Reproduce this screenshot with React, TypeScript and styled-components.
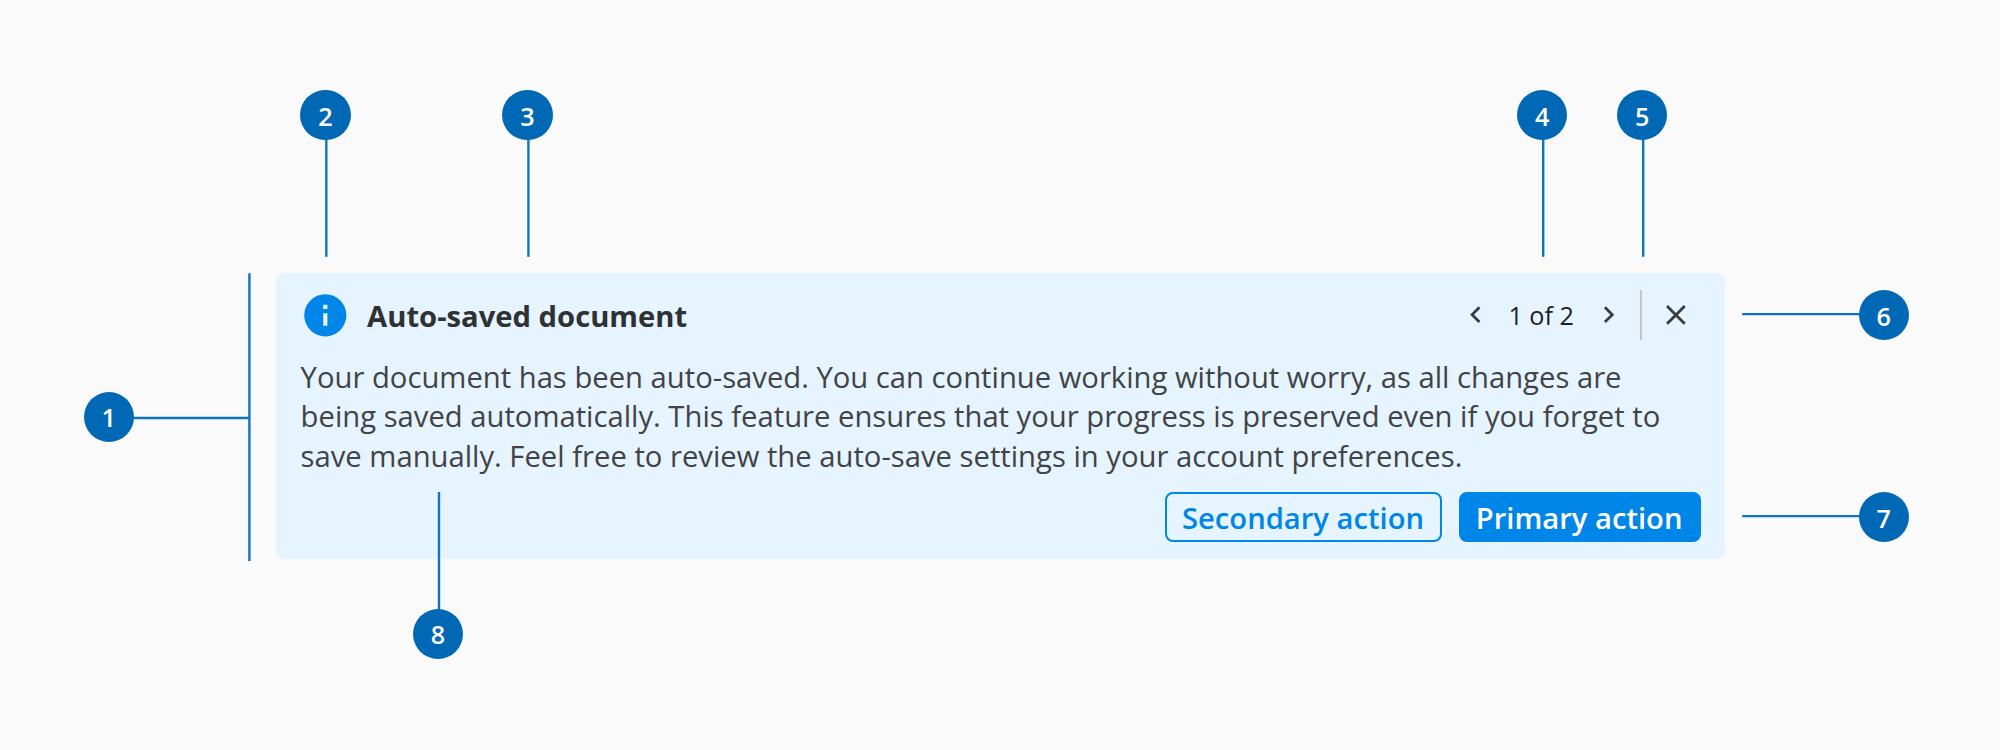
import React from "react";
import styled, { createGlobalStyle } from "styled-components";

const color = {
  page: "#fafafa",
  surface: "#e5f4ff",
  accent: "#0085e8",
  marker: "#0068b5",
  leader: "#0f74bf",
  title: "#2f3133",
  body: "#414345",
  icon: "#3a3c3e",
  divider: "#c2c5c8",
};

const GlobalStyle = createGlobalStyle`
  *, *::before, *::after { box-sizing: border-box; }
  body {
    margin: 0;
    background: ${color.page};
    font-family: "Open Sans", "Noto Sans", sans-serif;
  }
`;

const Stage = styled.main`
  position: relative;
  display: flex;
  align-items: flex-start;
  width: 2000px;
  height: 750px;
  padding: 273.4px 0 0 275.6px;
  overflow: hidden;
  background: ${color.page};
`;

const Banner = styled.section`
  display: flex;
  flex-direction: column;
  width: 1449.8px;
  height: 285.3px;
  padding: 16.6px 24.8px 16.4px 25px;
  border-radius: 8px;
  background: ${color.surface};
`;

const Header = styled.header`
  display: flex;
  align-items: center;
  height: 50px;
`;

const Title = styled.h2`
  flex: 1;
  margin: 1.4px 0 0 16.5px;
  color: ${color.title};
  font-size: 29.2px;
  font-weight: 700;
  line-height: 40px;
`;

const Pager = styled.nav`
  display: flex;
  align-items: center;
  margin-right: 14.6px;
`;

const PageCount = styled.span`
  margin: 1px 18px 0 16.4px;
  color: #1f2123;
  font-size: 25.2px;
  line-height: 34px;
`;

const IconButton = styled.button`
  display: flex;
  padding: 0;
  border: 0;
  background: none;
  color: ${color.icon};
`;

const CloseButton = styled(IconButton)`
  margin: 0 8.2px 0 16.3px;
`;

const Divider = styled.span`
  width: 2.4px;
  height: 50px;
  background: ${color.divider};
`;

const Icon = styled.svg<{ $size: number }>`
  display: block;
  flex: none;
  width: ${(p) => p.$size}px;
  height: ${(p) => p.$size}px;
  fill: currentColor;
`;

const InfoIcon = styled(Icon)`
  margin-left: -0.6px;
  color: ${color.accent};
`;

const Message = styled.p`
  margin: 17.9px 0 0;
  padding-right: 28px;
  color: ${color.body};
  font-size: 29.22px;
  line-height: 39.6px;
`;

const Actions = styled.footer`
  display: flex;
  justify-content: flex-end;
  gap: 16.4px;
  margin-top: auto;
`;

const ActionButton = styled.button<{ $primary?: boolean }>`
  width: ${(p) => (p.$primary ? 242 : 277.4)}px;
  height: 50.3px;
  padding: 1px 1px 0 0;
  border: 2px solid ${color.accent};
  border-radius: 8px;
  background: ${(p) => (p.$primary ? color.accent : "transparent")};
  color: ${(p) => (p.$primary ? "#fff" : color.accent)};
  font: 600 29.2px/40px "Open Sans", "Noto Sans", sans-serif;
  white-space: nowrap;
`;

const Leaders = styled.svg`
  position: absolute;
  inset: 0;
  width: 2000px;
  height: 750px;
  fill: none;
  stroke: ${color.leader};
  stroke-width: 2.4;
`;

const Marker = styled.span<{ $x: number; $y: number; $drop?: number }>`
  position: absolute;
  left: ${(p) => p.$x - 25.1}px;
  top: ${(p) => p.$y - 25.1}px;
  display: flex;
  align-items: center;
  justify-content: center;
  width: 50.2px;
  height: 50.2px;
  padding-top: ${(p) => p.$drop ?? 2}px;
  border-radius: 50%;
  background: ${color.marker};
  color: #fff;
  font-size: 25.2px;
  font-weight: 600;
  line-height: 34px;
`;

const markers = [
  { n: 1, x: 108.8, y: 417, drop: 0 },
  { n: 2, x: 325.5, y: 114.9 },
  { n: 3, x: 527.5, y: 114.9 },
  { n: 4, x: 1542.2, y: 114.9 },
  { n: 5, x: 1642.2, y: 114.9 },
  { n: 6, x: 1883.8, y: 314.9 },
  { n: 7, x: 1883.8, y: 517.1, drop: 1 },
  { n: 8, x: 437.9, y: 633.9, drop: 1 },
];

const leaders = [
  "M130 418H249.4M249.4 273.3V561",
  "M326.3 138V256.8",
  "M528.4 138V256.8",
  "M1543.2 138V256.8",
  "M1643.2 138V256.8",
  "M1742.2 314.1H1862",
  "M1742.2 516.1H1862",
  "M439 492V612",
];

export default function App() {
  return (
    <>
      <GlobalStyle />
      <Stage>
        <Banner>
          <Header>
            <InfoIcon $size={50.6} viewBox="0 0 24 24">
              <path d="M12 2a10 10 0 1 0 0 20 10 10 0 0 0 0-20zm1 15h-2v-6h2zm0-8h-2V7h2z" />
            </InfoIcon>
            <Title>Auto-saved document</Title>
            <Pager>
              <IconButton aria-label="Previous">
                <Icon $size={33.4} viewBox="0 0 24 24">
                  <path d="M15.41 7.41 14 6l-6 6 6 6 1.41-1.41L10.83 12z" />
                </Icon>
              </IconButton>
              <PageCount>1 of 2</PageCount>
              <IconButton aria-label="Next">
                <Icon $size={33.4} viewBox="0 0 24 24">
                  <path d="M10 6 8.59 7.41 13.17 12l-4.58 4.59L10 18l6-6z" />
                </Icon>
              </IconButton>
            </Pager>
            <Divider />
            <CloseButton aria-label="Close">
              <Icon $size={33.8} viewBox="0 0 24 24">
                <path d="M19 6.41 17.59 5 12 10.59 6.41 5 5 6.41 10.59 12 5 17.59 6.41 19 12 13.41 17.59 19 19 17.59 13.41 12z" />
              </Icon>
            </CloseButton>
          </Header>
          <Message>
            Your document has been auto-saved. You can continue working without
            worry, as all changes are being saved automatically. This feature
            ensures that your progress is preserved even if you forget to save
            manually. Feel free to review the auto-save settings in your account
            preferences.
          </Message>
          <Actions>
            <ActionButton>Secondary action</ActionButton>
            <ActionButton $primary>Primary action</ActionButton>
          </Actions>
        </Banner>
        <Leaders viewBox="0 0 2000 750">
          {leaders.map((d) => (
            <path key={d} d={d} />
          ))}
        </Leaders>
        {markers.map((m) => (
          <Marker key={m.n} $x={m.x} $y={m.y} $drop={m.drop}>
            {m.n}
          </Marker>
        ))}
      </Stage>
    </>
  );
}
